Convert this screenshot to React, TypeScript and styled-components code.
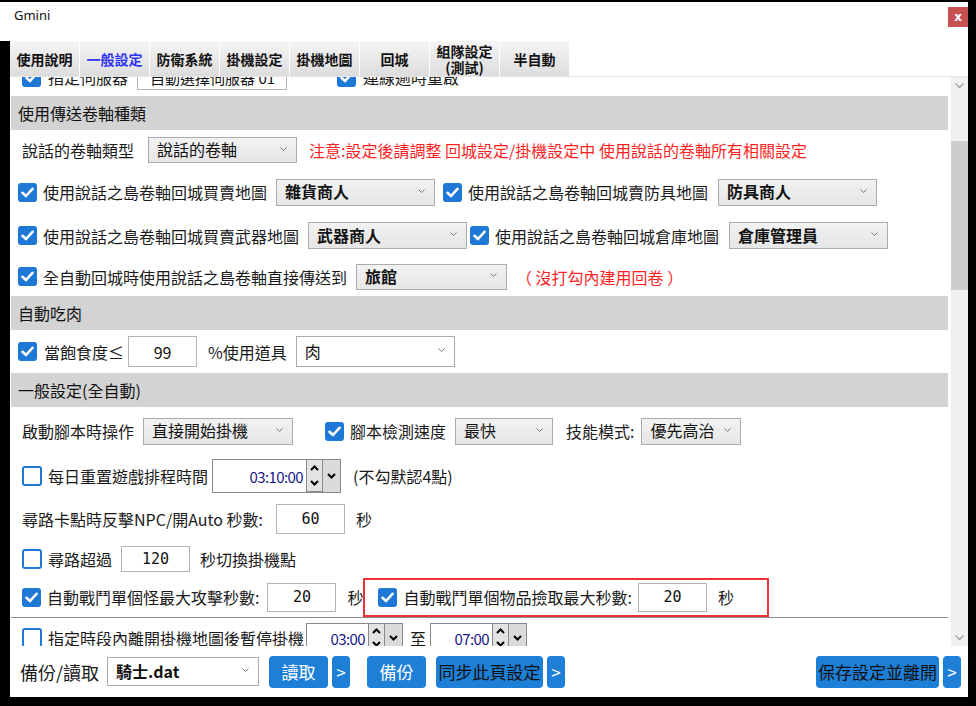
import styled, { createGlobalStyle } from 'styled-components';

const GlobalStyle = createGlobalStyle`
  html, body {
    margin: 0;
    padding: 0;
    background: #000;
  }
  body {
    width: 976px;
    height: 706px;
    overflow: hidden;
    font-family: "Noto Sans CJK TC", "Noto Sans", sans-serif;
    color: #1a1a1a;
  }
`;

const Window = styled.div`
  width: 968px;
  height: 695px;
  margin-top: 2px;
  background: #fff;
  display: flex;
  flex-direction: column;
`;

const TitleBar = styled.div`
  height: 39px;
  flex-shrink: 0;
  display: flex;
  justify-content: space-between;
  align-items: flex-start;
`;

const Title = styled.div`
  font-family: "Noto Sans", sans-serif;
  font-size: 13px;
  line-height: 18px;
  padding: 4px 0 0 14px;
  color: #111;
`;

const CloseBtn = styled.div`
  width: 20px;
  height: 20px;
  margin-top: 5px;
  background: #c75050;
  color: #fff;
  font: bold 12px "DejaVu Sans", sans-serif;
  display: flex;
  align-items: center;
  justify-content: center;
`;

const Body = styled.div`
  flex: 1;
  display: flex;
  min-height: 0;
`;

const Gutter = styled.div`
  width: 10px;
  background: #000;
  flex-shrink: 0;
`;

const Main = styled.div`
  flex: 1;
  display: flex;
  flex-direction: column;
  min-width: 0;
`;

const Tabs = styled.div`
  height: 35px;
  display: flex;
  border-bottom: 1px solid #e6e6e6;
  flex-shrink: 0;
`;

const Tab = styled.div<{ $active?: boolean }>`
  width: 69px;
  border-right: 1px solid #fff;
  background: linear-gradient(#f5f5f5, #dddddd);
  color: ${(p) => (p.$active ? '#2f34f5' : '#111')};
  font-size: 14px;
  font-weight: 700;
  line-height: 16px;
  text-align: center;
  white-space: pre;
  display: flex;
  align-items: center;
  justify-content: center;
`;

const Viewport = styled.div`
  height: 569px;
  display: flex;
  flex-shrink: 0;
`;

const Content = styled.div`
  flex: 1;
  overflow: hidden;
`;

// content is scrolled a little past the first row
const Scrolled = styled.div`
  margin-top: -19px;
`;

const ScrollBar = styled.div`
  width: 17px;
  background: #f0f0f0;
  display: flex;
  flex-direction: column;
  align-items: stretch;
`;

const ScrollArrow = styled.div`
  height: 17px;
  display: flex;
  align-items: center;
  justify-content: center;
`;

const ScrollTrack = styled.div`
  flex: 1;
  padding-top: 47px;
`;

const Thumb = styled.div`
  height: 149px;
  background: #cdcdcd;
`;

const Row = styled.div<{ $h: number; $pl: number }>`
  height: ${(p) => p.$h}px;
  padding-left: ${(p) => p.$pl}px;
  display: flex;
  align-items: center;
  white-space: nowrap;
`;

const Header = styled.div`
  height: 34px;
  margin: 0 3px 0 1px;
  background: #d3d3d3;
  display: flex;
  align-items: center;
  padding-left: 7px;
  font-size: 16px;
  color: #111;
`;

const Divider = styled.div`
  height: 1px;
  margin: 0 3px 0 1px;
  background: #8c8c8c;
`;

const Label = styled.span<{ $ml?: number; $red?: boolean }>`
  margin-left: ${(p) => p.$ml ?? 0}px;
  font-size: 16px;
  line-height: 20px;
  color: ${(p) => (p.$red ? '#ff1f1f' : '#1a1a1a')};
`;

const Box = styled.span<{ $checked?: boolean; $ml?: number }>`
  width: ${(p) => (p.$checked ? 19 : 16)}px;
  height: ${(p) => (p.$checked ? 19 : 16)}px;
  margin-left: ${(p) => p.$ml ?? 0}px;
  border-radius: 3px;
  flex-shrink: 0;
  background: ${(p) => (p.$checked ? '#1e78d6' : '#fff')};
  border: ${(p) => (p.$checked ? 'none' : '2px solid #1e78d6')};
  display: flex;
  align-items: center;
  justify-content: center;
`;

const Select = styled.div<{ $w: number; $h: number; $ml?: number; $bold?: boolean; $flat?: boolean }>`
  width: ${(p) => p.$w}px;
  height: ${(p) => p.$h}px;
  margin-left: ${(p) => p.$ml ?? 0}px;
  box-sizing: border-box;
  flex-shrink: 0;
  border: 1px solid #acacac;
  background: ${(p) => (p.$flat ? '#fff' : 'linear-gradient(#f2f2f2, #e6e6e6)')};
  display: flex;
  align-items: center;
  justify-content: space-between;
  padding: 0 9px 2px 8px;
  font-size: 16px;
  font-weight: ${(p) => (p.$bold ? 700 : 400)};
  color: #111;
`;

const Field = styled.div<{ $w: number; $h: number; $ml?: number; $mono?: boolean }>`
  width: ${(p) => p.$w}px;
  height: ${(p) => p.$h}px;
  margin-left: ${(p) => p.$ml ?? 0}px;
  box-sizing: border-box;
  flex-shrink: 0;
  border: 1px solid #b4b4b4;
  background: #fff;
  display: flex;
  align-items: center;
  justify-content: center;
  font-family: ${(p) => (p.$mono ? '"DejaVu Sans Mono", monospace' : 'inherit')};
  font-size: ${(p) => (p.$mono ? 15 : 16)}px;
  color: #111;
`;

const PlainField = styled(Field)`
  justify-content: flex-start;
  padding-left: 12px;
  font-size: 15px;
`;

const TimeBox = styled.div<{ $w: number; $h: number; $ml?: number }>`
  width: ${(p) => p.$w}px;
  height: ${(p) => p.$h}px;
  margin-left: ${(p) => p.$ml ?? 0}px;
  box-sizing: border-box;
  flex-shrink: 0;
  border: 1px solid #8a8a8a;
  background: #fff;
  display: flex;
`;

const TimeText = styled.div`
  flex: 1;
  display: flex;
  align-items: center;
  justify-content: flex-end;
  padding-right: 3px;
  font-size: 15px;
  letter-spacing: -0.6px;
  color: #16168a;
`;

const Spin = styled.div`
  width: 17px;
  display: flex;
  flex-direction: column;
`;

const SpinBtn = styled.div`
  flex: 1;
  background: #e3e3e3;
  border: 1px solid #8a8a8a;
  border-top: none;
  display: flex;
  align-items: center;
  justify-content: center;
  &:first-child {
    border-bottom: none;
  }
`;

const DropBtn = styled.div`
  width: 17px;
  background: #dadada;
  display: flex;
  align-items: center;
  justify-content: center;
`;

const Highlight = styled.div`
  height: 39px;
  box-sizing: border-box;
  border: 2px solid #ec3038;
  display: flex;
  align-items: center;
  padding: 0 33px 0 13px;
`;

const BottomBar = styled.div`
  height: 51px;
  display: flex;
  align-items: center;
  padding: 0 7px 0 10px;
  flex-shrink: 0;
`;

const BigLabel = styled.span`
  font-size: 18px;
  color: #1a1a1a;
`;

const Button = styled.div<{ $w: number; $ml?: number; $dark?: boolean }>`
  width: ${(p) => p.$w}px;
  height: 32px;
  margin-left: ${(p) => p.$ml ?? 0}px;
  flex-shrink: 0;
  border-radius: 4px;
  background: #1e7fd7;
  color: ${(p) => (p.$dark ? '#111' : '#fff')};
  font-size: 17px;
  display: flex;
  align-items: center;
  justify-content: center;
`;

const Spacer = styled.div`
  flex: 1;
`;

const Check = () => (
  <svg width="13" height="11" viewBox="0 0 13 11">
    <polyline points="1.5,5.8 5,9 11.5,1.8" fill="none" stroke="#fff" strokeWidth="2.6" strokeLinecap="round" strokeLinejoin="round" />
  </svg>
);

const CheckBox = ({ checked = true, ml }: { checked?: boolean; ml?: number }) => (
  <Box $checked={checked} $ml={ml}>{checked && <Check />}</Box>
);

const Chevron = ({ color = '#777', w = 7, sw = 1 }: { color?: string; w?: number; sw?: number }) => (
  <svg width={w} height={w / 2 + 1} viewBox={`0 0 ${w} ${w / 2 + 1}`}>
    <polyline points={`0.5,0.5 ${w / 2},${w / 2} ${w - 0.5},0.5`} fill="none" stroke={color} strokeWidth={sw} />
  </svg>
);

const Caret = ({ up }: { up?: boolean }) => (
  <svg width="9" height="6" viewBox="0 0 9 6">
    <polyline points={up ? '1,5 4.5,1.5 8,5' : '1,1 4.5,4.5 8,1'} fill="none" stroke="#000" strokeWidth="2" />
  </svg>
);

const Dropdown = (props: { w: number; h: number; ml?: number; bold?: boolean; flat?: boolean; text: string }) => (
  <Select $w={props.w} $h={props.h} $ml={props.ml} $bold={props.bold} $flat={props.flat}>
    <span>{props.text}</span>
    <Chevron />
  </Select>
);

const TimePicker = ({ w, h, ml, value }: { w: number; h: number; ml?: number; value: string }) => (
  <TimeBox $w={w} $h={h} $ml={ml}>
    <TimeText>{value}</TimeText>
    <Spin>
      <SpinBtn><Caret up /></SpinBtn>
      <SpinBtn><Caret /></SpinBtn>
    </Spin>
    <DropBtn><Caret /></DropBtn>
  </TimeBox>
);

const tabs = ['使用說明', '一般設定', '防衛系統', '掛機設定', '掛機地圖', '回城', '組隊設定\n(測試)', '半自動'];

export default function App() {
  return (
    <>
      <GlobalStyle />
      <Window>
        <TitleBar>
          <Title>Gmini</Title>
          <CloseBtn>x</CloseBtn>
        </TitleBar>
        <Body>
          <Gutter />
          <Main>
            <Tabs>
              {tabs.map((t, i) => (
                <Tab key={t} $active={i === 1}>{t}</Tab>
              ))}
            </Tabs>
            <Viewport>
              <Content>
                <Scrolled>
                  <Row $h={38} $pl={12}>
                    <CheckBox />
                    <Label $ml={7}>指定伺服器</Label>
                    <PlainField $w={150} $h={25} $ml={9}>自動選擇伺服器 01</PlainField>
                    <CheckBox ml={50} />
                    <Label $ml={7}>連線逾時重啟</Label>
                  </Row>
                  <Header>使用傳送卷軸種類</Header>
                  <Row $h={40} $pl={12}>
                    <Label>說話的卷軸類型</Label>
                    <Dropdown w={149} h={26} ml={14} text="說話的卷軸" />
                    <Label $ml={12} $red>注意:設定後請調整 回城設定/掛機設定中 使用說話的卷軸所有相關設定</Label>
                  </Row>
                  <Row $h={44} $pl={8}>
                    <CheckBox />
                    <Label $ml={6}>使用說話之島卷軸回城買賣地圖</Label>
                    <Dropdown w={159} h={27} ml={9} bold text="雜貨商人" />
                    <CheckBox ml={8} />
                    <Label $ml={6}>使用說話之島卷軸回城賣防具地圖</Label>
                    <Dropdown w={159} h={27} ml={10} bold text="防具商人" />
                  </Row>
                  <Row $h={43} $pl={8}>
                    <CheckBox />
                    <Label $ml={6}>使用說話之島卷軸回城買賣武器地圖</Label>
                    <Dropdown w={159} h={27} ml={9} bold text="武器商人" />
                    <CheckBox ml={3} />
                    <Label $ml={6}>使用說話之島卷軸回城倉庫地圖</Label>
                    <Dropdown w={159} h={27} ml={10} bold text="倉庫管理員" />
                  </Row>
                  <Row $h={39} $pl={8}>
                    <CheckBox />
                    <Label $ml={6}>全自動回城時使用說話之島卷軸直接傳送到</Label>
                    <Dropdown w={151} h={26} ml={9} bold text="旅館" />
                    <Label $ml={9} $red>（ 沒打勾內建用回卷 ）</Label>
                  </Row>
                  <Header>自動吃肉</Header>
                  <Row $h={43} $pl={8}>
                    <CheckBox />
                    <Label $ml={7}>當飽食度≤</Label>
                    <Field $w={69} $h={31} $ml={4}>99</Field>
                    <Label $ml={11}>%使用道具</Label>
                    <Dropdown w={159} h={31} ml={9} flat text="肉" />
                  </Row>
                  <Header>一般設定(全自動)</Header>
                  <Row $h={48} $pl={12}>
                    <Label>啟動腳本時操作</Label>
                    <Dropdown w={150} h={27} ml={9} text="直接開始掛機" />
                    <CheckBox ml={32} />
                    <Label $ml={6}>腳本檢測速度</Label>
                    <Dropdown w={98} h={27} ml={9} text="最快" />
                    <Label $ml={13}>技能模式:</Label>
                    <Dropdown w={100} h={27} ml={7} text="優先高治" />
                  </Row>
                  <Row $h={42} $pl={12}>
                    <CheckBox checked={false} />
                    <Label $ml={6}>每日重置遊戲排程時間</Label>
                    <TimePicker w={129} h={34} ml={4} value="03:10:00" />
                    <Label $ml={12}>(不勾默認4點)</Label>
                  </Row>
                  <Row $h={43} $pl={12}>
                    <Label>尋路卡點時反擊NPC/開Auto 秒數:</Label>
                    <Field $w={69} $h={30} $ml={13} $mono>60</Field>
                    <Label $ml={11}>秒</Label>
                  </Row>
                  <Row $h={37} $pl={12}>
                    <CheckBox checked={false} />
                    <Label $ml={6}>尋路超過</Label>
                    <Field $w={69} $h={26} $ml={9} $mono>120</Field>
                    <Label $ml={10}>秒切換掛機點</Label>
                  </Row>
                  <Row $h={40} $pl={12}>
                    <CheckBox />
                    <Label $ml={6}>自動戰鬥單個怪最大攻擊秒數:</Label>
                    <Field $w={69} $h={29} $ml={8} $mono>20</Field>
                    <Label $ml={11}>秒</Label>
                    <Highlight>
                      <CheckBox />
                      <Label $ml={6}>自動戰鬥單個物品撿取最大秒數:</Label>
                      <Field $w={69} $h={29} $ml={6} $mono>20</Field>
                      <Label $ml={11}>秒</Label>
                    </Highlight>
                  </Row>
                  <Divider />
                  <Row $h={40} $pl={12}>
                    <CheckBox checked={false} />
                    <Label $ml={6}>指定時段內離開掛機地圖後暫停掛機</Label>
                    <TimePicker w={97} h={30} ml={2} value="03:00" />
                    <Label $ml={7}>至</Label>
                    <TimePicker w={97} h={30} ml={4} value="07:00" />
                  </Row>
                </Scrolled>
              </Content>
              <ScrollBar>
                <ScrollArrow><Chevron color="#a3a3a3" w={9} sw={1.4} /></ScrollArrow>
                <ScrollTrack>
                  <Thumb />
                </ScrollTrack>
                <ScrollArrow><Chevron color="#a3a3a3" w={9} sw={1.4} /></ScrollArrow>
              </ScrollBar>
            </Viewport>
            <BottomBar>
              <BigLabel>備份/讀取</BigLabel>
              <Dropdown w={152} h={29} ml={8} bold flat text="騎士.dat" />
              <Button $w={59} $ml={10}>讀取</Button>
              <Button $w={18} $ml={4}>&gt;</Button>
              <Button $w={59} $ml={17}>備份</Button>
              <Button $w={107} $ml={10} $dark>同步此頁設定</Button>
              <Button $w={18} $ml={4}>&gt;</Button>
              <Spacer />
              <Button $w={123} $dark>保存設定並離開</Button>
              <Button $w={18} $ml={4}>&gt;</Button>
            </BottomBar>
          </Main>
        </Body>
      </Window>
    </>
  );
}
